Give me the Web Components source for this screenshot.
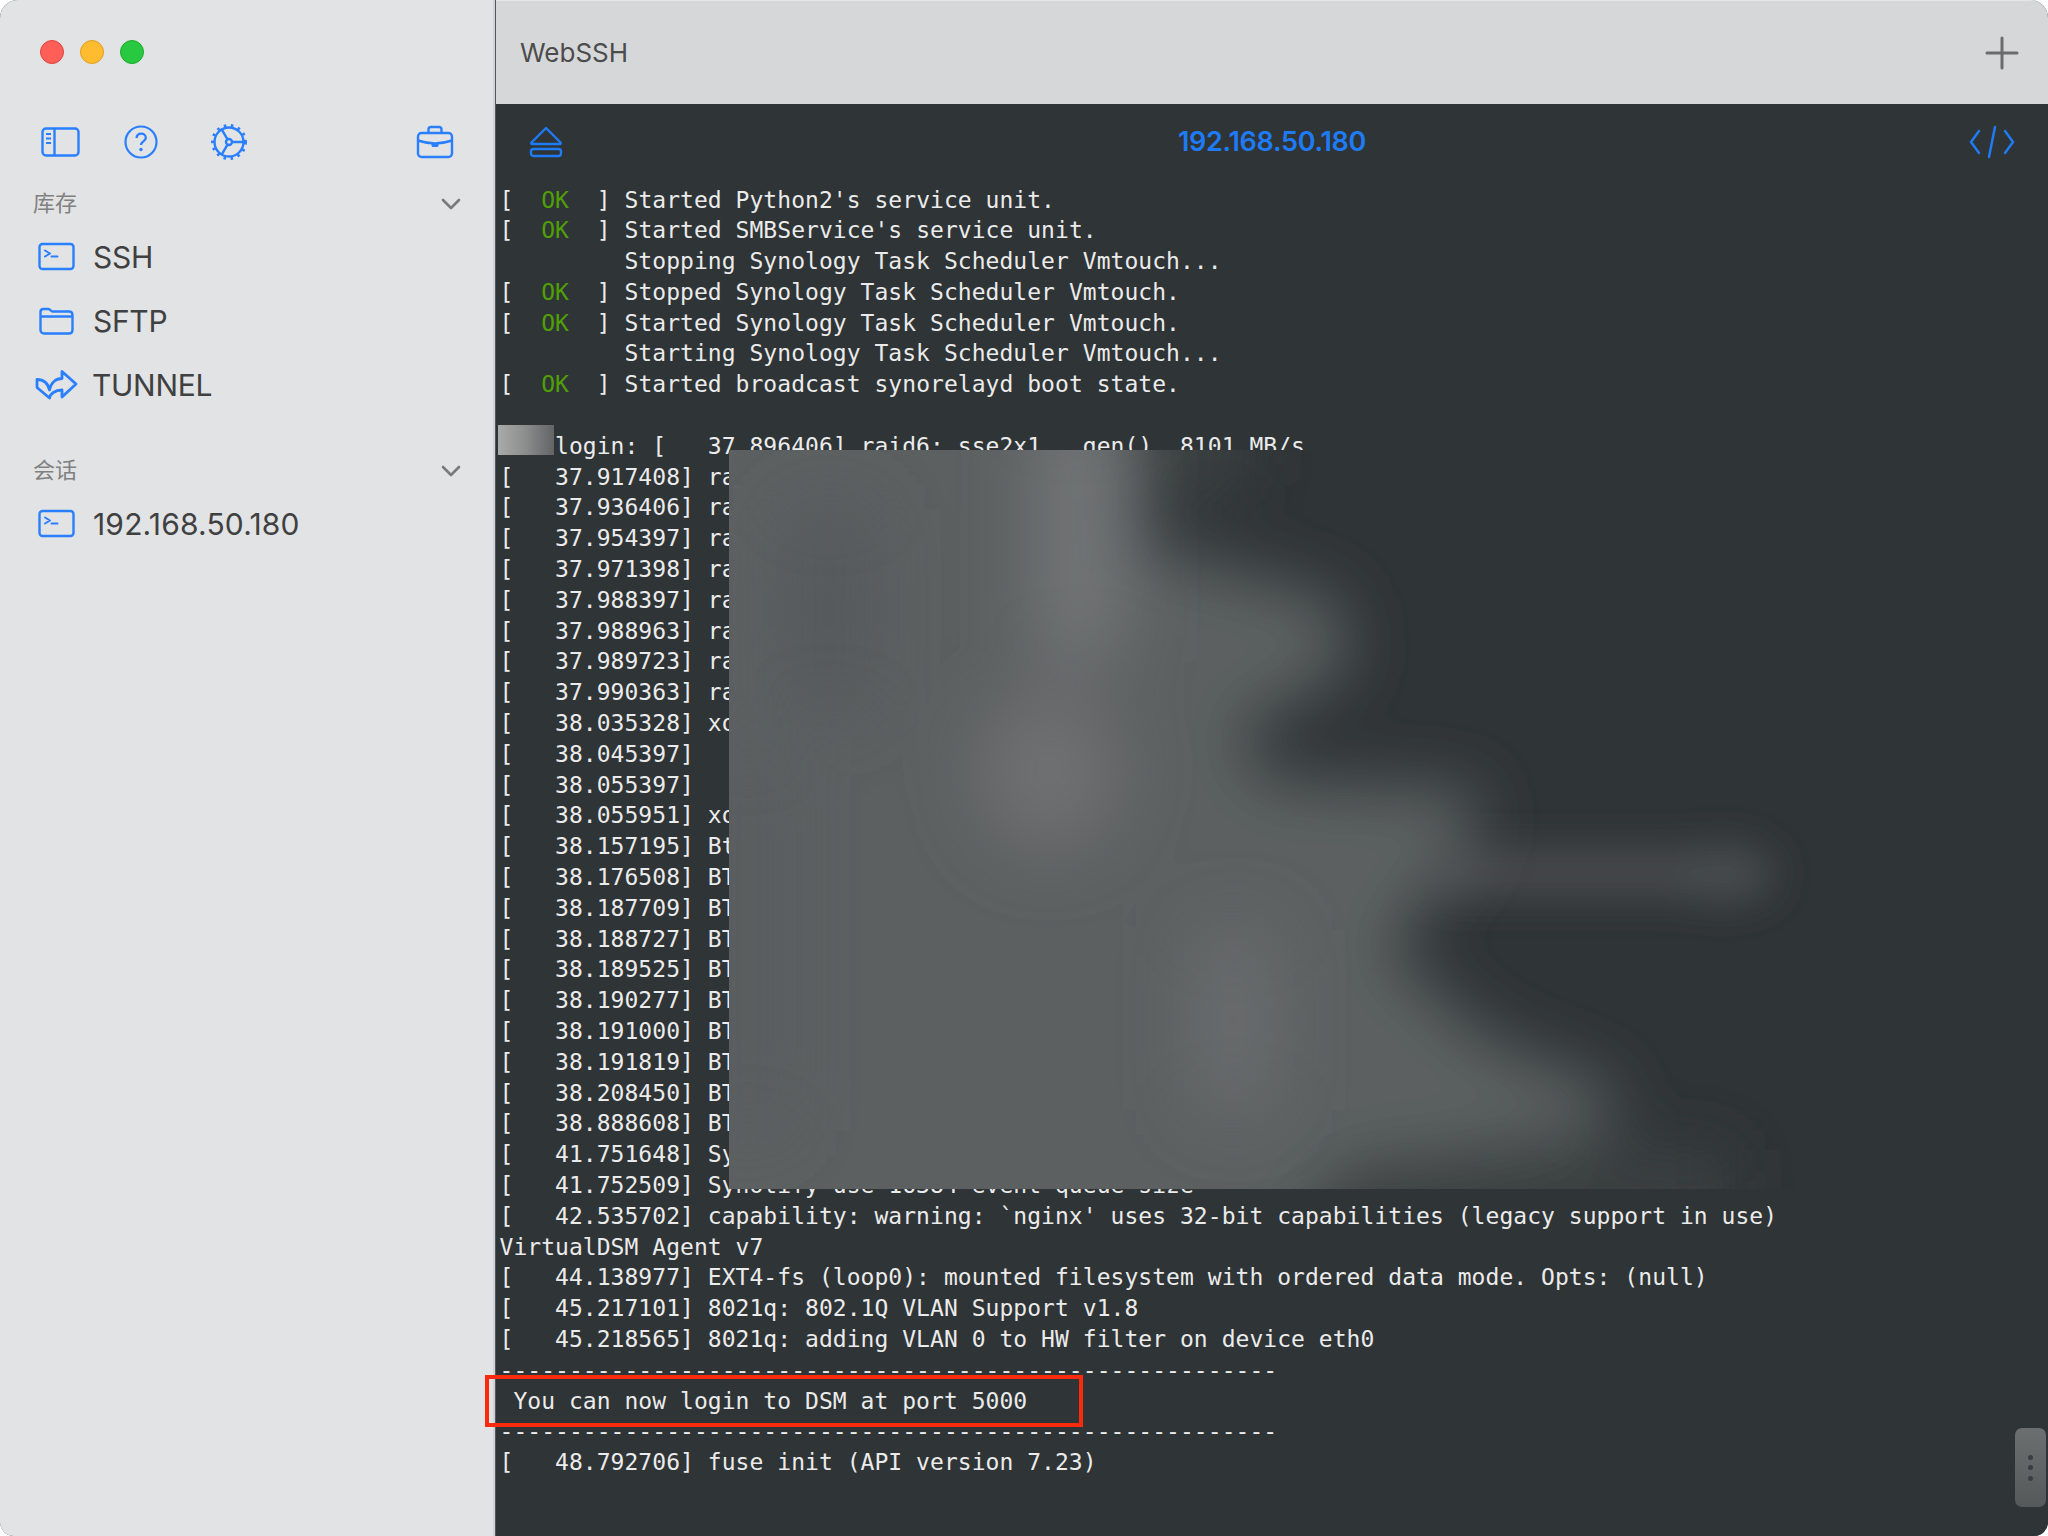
<!DOCTYPE html>
<html lang="zh">
<head>
<meta charset="utf-8">
<title>WebSSH</title>
<style>
  html, body { margin: 0; padding: 0; background: #fff; }
</style>
</head>
<body>
<app-window>
  <side-bar slot="side">
    <section-head>库存</section-head>
    <side-item icon="term">SSH</side-item>
    <side-item icon="folder">SFTP</side-item>
    <side-item icon="tunnel">TUNNEL</side-item>
    <section-head class="second">会话</section-head>
    <side-item icon="term" class="digits">192.168.50.180</side-item>
  </side-bar>
  <title-bar slot="title">WebSSH</title-bar>
  <term-toolbar slot="title">192.168.50.180</term-toolbar>
  <term-view slot="main"></term-view>
</app-window>

<script>
const icons = {
    term: `<svg width="38" height="30" viewBox="0 0 38 30" fill="none" stroke="#2a7fff" stroke-width="2.4" stroke-linecap="round" stroke-linejoin="round"><rect x="1.5" y="2" width="34" height="25" rx="3"/><path d="M7 8.5l5 3-5 3M13.5 14.5h6" stroke-width="2"/></svg>`,
    folder: `<svg width="38" height="30" viewBox="0 0 38 30" fill="none" stroke="#2a7fff" stroke-width="2.4" stroke-linejoin="round"><path d="M2.5 6c0-1.800 1-3 3-3h5c1.600 0 2.400 2.500 4 2.500h16.500c2.200 0 3.500 1.300 3.500 3.500v15c0 2-1.300 3.500-3.500 3.500h-25c-2.200 0-3.500-1.500-3.500-3.500zM2.500 10.500h33"/></svg>`,
    tunnel: `<svg width="60" height="50" viewBox="0 0 60 50" fill="none" stroke="#2a7fff" stroke-width="2.800" stroke-linejoin="round" stroke-linecap="round"><path d="M46 24L32 11.500V18.500C26 18.500 21 22.500 19.500 30C18 23.500 14.500 19.500 7 19.500V27.500L19.500 38C20 34 25 30 32 30V37z"/></svg>`
};

class AppWindow extends HTMLElement {
    constructor() {
        super();
        this.attachShadow({ mode: "open" });
        this.shadowRoot.innerHTML = `
            <style>
                :host { display: grid; grid-template-columns: 495px 1fr; width: 2048px; height: 1536px; border-radius: 18px 18px 14px 14px; overflow: hidden; background: #2f3436; }
                .left { background: #e2e3e5; border-right: 2px solid #d1d2d4; box-sizing: border-box; min-height: 0; }
                .right { display: flex; flex-direction: column; border-left: 1px solid #55585a; min-width: 0; min-height: 0; position: relative; }
            </style>
            <div class="left"><slot name="side"></slot></div>
            <div class="right">
                <slot name="title"></slot>
                <slot name="main"></slot>
            </div>
        `;
    }
}

class SideBar extends HTMLElement {
    constructor() {
        super();
        this.attachShadow({ mode: "open" });
        this.shadowRoot.innerHTML = `
            <style>
                :host { display: block; font-family: Inter, "Noto Sans CJK SC", sans-serif; }
                .lights { display: flex; gap: 16px; padding: 40px 0 0 40px; height: 24px; }
                .lights i { display: block; width: 24px; height: 24px; border-radius: 50%; box-sizing: border-box; border: 1px solid; }
                .tools { display: flex; align-items: center; margin-top: 60px; height: 36px; padding: 0 41px; position: relative; }
                .tools svg { display: block; flex: none; }
                .spacer { flex: 1; }
            </style>
            <div class="lights">
                <i style="background:#ff5f57;border-color:#e0443e"></i>
                <i style="background:#febc2e;border-color:#dfa023"></i>
                <i style="background:#28c840;border-color:#1aab29"></i>
            </div>
            <div class="tools">
                <svg width="40" height="32" viewBox="0 0 40 32" fill="none" stroke="#2a7fff" stroke-width="2.400"><rect x="1.500" y="2.500" width="36" height="27" rx="3.500"/><path d="M13.500 2.500v27" /><path d="M5 8h5M5 12.500h5M5 17h5" stroke-width="2"/></svg>
                <svg width="36" height="36" viewBox="0 0 36 36" fill="none" stroke="#2a7fff" stroke-width="2.200" style="margin-left:42px"><circle cx="18" cy="18" r="15.500"/><path d="M13.500 14.200c.3-3 2.200-4.500 4.700-4.500 2.700 0 4.600 1.700 4.600 4 0 3.700-4.800 3.600-4.800 7.300" stroke-width="2.300"/><circle cx="18" cy="25.500" r="1.700" fill="#2a7fff" stroke="none"/></svg>
                <svg width="40" height="40" viewBox="0 0 40 40" fill="none" stroke="#2a7fff" stroke-width="2.400" style="margin-left:50px"><circle cx="20" cy="20" r="14.500"/><circle cx="20" cy="20" r="16.500" stroke-width="3" stroke-dasharray="2.500 4.700"/><circle cx="20" cy="20" r="3"/><path d="M23 20h11.500M18.500 17.400L12.700 7.400M18.500 22.600L12.700 32.600"/></svg>
                <div class="spacer"></div>
                <svg width="38" height="34" viewBox="0 0 38 34" fill="none" stroke="#2a7fff" stroke-width="2.400" style="margin-right:-2px" stroke-linejoin="round"><rect x="2" y="8" width="34" height="24" rx="3.500"/><path d="M12.500 8V4.500c0-1.500 1-2.500 2.500-2.500h8c1.500 0 2.500 1 2.500 2.500V8"/><path d="M2 15.500c6 2 11 3 17 3s11-1 17-3"/><path d="M15.500 18h7v2.500c0 .8-.7 1.500-1.500 1.500h-4c-.8 0-1.500-.7-1.500-1.500z" fill="#2a7fff" stroke="none"/></svg>
            </div>
            <slot></slot>
        `;
    }
}

class SectionHead extends HTMLElement {
    constructor() {
        super();
        this.attachShadow({ mode: "open" });
        this.shadowRoot.innerHTML = `
            <style>
                :host { display: flex; align-items: center; justify-content: space-between; height: 30px; padding: 0 32px 0 33px; margin: 26px 0 9px; color: #808080; font-size: 22px; font-family: "Noto Sans CJK SC", sans-serif; }
                :host(.second) { margin-top: 36px; }
                svg { display: block; margin-top: 6px; }
            </style>
            <span><slot></slot></span>
            <svg width="20" height="12" viewBox="0 0 20 12" fill="none" stroke="#7a7a7a" stroke-width="2.600" stroke-linecap="round" stroke-linejoin="round"><path d="M2 2l8 8 8-8"/></svg>
        `;
    }
}

class SideItem extends HTMLElement {
    constructor() {
        super();
        this.attachShadow({ mode: "open" });
        const icon = icons[this.getAttribute("icon")] || "";
        this.shadowRoot.innerHTML = `
            <style>
                :host { display: flex; align-items: center; height: 64px; padding-left: 38px; color: #404040; font-size: 30px; font-family: Inter, sans-serif; letter-spacing: -0.3px; }
                :host(.digits) { letter-spacing: 0.17px; }
                .ico { width: 55px; height: 30px; display: flex; align-items: center; flex: none; }
                .ico svg { display: block; flex: none; }
                :host([icon="tunnel"]) .ico svg { margin-left: -8px; }
                :host([icon="tunnel"]) .text { margin-left: -1px; }
            </style>
            <span class="ico">${icon}</span>
            <span class="text"><slot></slot></span>
        `;
    }
}

class TitleBar extends HTMLElement {
    constructor() {
        super();
        this.attachShadow({ mode: "open" });
        this.shadowRoot.innerHTML = `
            <style>
                :host { display: flex; align-items: center; justify-content: space-between; height: 104px; flex: none; box-sizing: border-box; padding: 0 29px 0 24px; background: #d6d7d9; border-top: 1px solid #e6e6e8; color: #4c4c4c; font: 26px Inter, sans-serif; }
                svg { display: block; }
            </style>
            <span><slot></slot></span>
            <svg width="34" height="34" viewBox="0 0 34 34" stroke="#6b6b6b" stroke-width="3" stroke-linecap="round"><path d="M17 2v30M2 17h30"/></svg>
        `;
    }
}

class TermToolbar extends HTMLElement {
    constructor() {
        super();
        this.attachShadow({ mode: "open" });
        this.shadowRoot.innerHTML = `
            <style>
                :host { display: grid; grid-template-columns: 1fr auto 1fr; align-items: center; height: 76px; flex: none; padding: 0 33px 0 33px; color: #1e7bf5; font: 600 27px Inter, sans-serif; letter-spacing: -0.3px; box-sizing: border-box; }
                svg { display: block; }
                span { margin-bottom: 2px; }
                .end { justify-self: end; }
            </style>
            <svg width="34" height="32" viewBox="0 0 34 32" fill="none" stroke="#1e7bf5" stroke-width="2.400" stroke-linejoin="round"><path d="M17 2L2.500 16.500c-.6.600-.3 1.500.6 1.500h27.800c.9 0 1.200-.9.600-1.500z"/><rect x="2" y="23" width="30" height="7" rx="2.500"/></svg>
            <span><slot></slot></span>
            <svg class="end" width="46" height="34" viewBox="0 0 46 34" fill="none" stroke="#1e7bf5" stroke-width="2.500" stroke-linecap="round" stroke-linejoin="round"><path d="M10 6L2 17l8 11M36 6l8 11-8 11M26 2l-6 30"/></svg>
        `;
    }
}

const OK = '[  <b>OK</b>  ] ';
const termLines = [
    OK + "Started Python2's service unit.",
    OK + "Started SMBService's service unit.",
    "         Stopping Synology Task Scheduler Vmtouch...",
    OK + "Stopped Synology Task Scheduler Vmtouch.",
    OK + "Started Synology Task Scheduler Vmtouch.",
    "         Starting Synology Task Scheduler Vmtouch...",
    OK + "Started broadcast synorelayd boot state.",
    "",
    "    login: [   37.896406] raid6: sse2x1   gen()  8101 MB/s",
    "[   37.917408] ra",
    "[   37.936406] ra",
    "[   37.954397] ra",
    "[   37.971398] ra",
    "[   37.988397] ra",
    "[   37.988963] ra",
    "[   37.989723] ra",
    "[   37.990363] ra",
    "[   38.035328] xo",
    "[   38.045397]",
    "[   38.055397]",
    "[   38.055951] xo",
    "[   38.157195] Bt",
    "[   38.176508] BT",
    "[   38.187709] BT",
    "[   38.188727] BT",
    "[   38.189525] BT",
    "[   38.190277] BT",
    "[   38.191000] BT",
    "[   38.191819] BT",
    "[   38.208450] BT",
    "[   38.888608] BT",
    "[   41.751648] Sy",
    "[   41.752509] Synotify use 16384 event queue size",
    "[   42.535702] capability: warning: `nginx' uses 32-bit capabilities (legacy support in use)",
    "VirtualDSM Agent v7",
    "[   44.138977] EXT4-fs (loop0): mounted filesystem with ordered data mode. Opts: (null)",
    "[   45.217101] 8021q: 802.1Q VLAN Support v1.8",
    "[   45.218565] 8021q: adding VLAN 0 to HW filter on device eth0",
    "-".repeat(56),
    " You can now login to DSM at port 5000",
    "-".repeat(56),
    "[   48.792706] fuse init (API version 7.23)"
];

class TermView extends HTMLElement {
    constructor() {
        super();
        this.attachShadow({ mode: "open" });
        this.shadowRoot.innerHTML = `
            <style>
                :host { display: block; flex: 1; position: relative; min-height: 0; background: #2f3436; color: #ebebeb; }
                pre { margin: 0; padding: 4.500px 0 0 3.500px; font: 23px/30.800px "DejaVu Sans Mono", monospace; letter-spacing: 0.04px; white-space: pre; }
                b { font-weight: normal; color: #4f9f06; }
                /* masks and marks painted over the screenshot */
                .hostname { position: absolute; left: 2px; top: 245px; width: 56px; height: 30px; background: linear-gradient(90deg, #a9aaaa, #8b8c8c 50%, #626465); }
                .red { position: absolute; left: -11px; top: 1195px; width: 598px; height: 52px; box-sizing: border-box; border: 4.500px solid #fb2a0c; }
                .grip { position: absolute; right: 2px; top: 1248px; width: 31px; height: 79px; border-radius: 7px; background: linear-gradient(#6b6f6f, #555959); display: flex; flex-direction: column; align-items: center; justify-content: center; gap: 5.500px; }
                .grip i { display: block; width: 5px; height: 5px; border-radius: 50%; background: #3a3e40; }
                svg.blur { position: absolute; left: 233px; top: 270px; }
            </style>
            <pre>${termLines.join("\n")}</pre>
            <div class="hostname"></div>
            <svg class="blur" width="1095" height="739" viewBox="0 0 1095 739">
                <defs>
                    <filter id="b1" x="-20%" y="-20%" width="140%" height="140%"><feGaussianBlur stdDeviation="32"/></filter>
                    <filter id="b2" x="-40%" y="-40%" width="180%" height="180%"><feGaussianBlur stdDeviation="38"/></filter>
                    <filter id="b3" x="-20%" y="-80%" width="140%" height="260%"><feGaussianBlur stdDeviation="20"/></filter>
                </defs>
                <rect width="1095" height="739" fill="#2f3436"/>
                <g filter="url(#b3)">
                    <path fill="#484c4e" d="M700 400H960V445H700z"/>
                    <ellipse cx="995" cy="424" rx="50" ry="28" fill="#4a4e50"/>
                </g>
                <g filter="url(#b1)">
                    <path fill="#3b3f41" d="M380-60H520V30L420 70zM580 700H1000V800H580z"/>
                    <path fill="#5c6061" d="M-80-80H400L400 90L470 110L610 150L620 220L510 280L540 330L750 340L740 400L660 500L760 590L890 640L870 685L610 715L560 800H-80z"/>
                </g>
                <g filter="url(#b2)">
                    <rect x="310" y="-40" width="80" height="250" fill="#767879"/>
                    <ellipse cx="320" cy="320" rx="70" ry="80" fill="#6f7172"/>
                    <rect x="470" y="480" width="70" height="180" fill="#6c6e6f"/>
                    <rect x="60" y="60" width="80" height="200" fill="#54585a"/>
                    <rect x="-10" y="300" width="60" height="380" fill="#585c5d"/>
                </g>
            </svg>
            <div class="red"></div>
            <div class="grip"><i></i><i></i><i></i></div>
        `;
    }
}

customElements.define("app-window", AppWindow);
customElements.define("side-bar", SideBar);
customElements.define("section-head", SectionHead);
customElements.define("side-item", SideItem);
customElements.define("title-bar", TitleBar);
customElements.define("term-toolbar", TermToolbar);
customElements.define("term-view", TermView);
</script>
</body>
</html>
